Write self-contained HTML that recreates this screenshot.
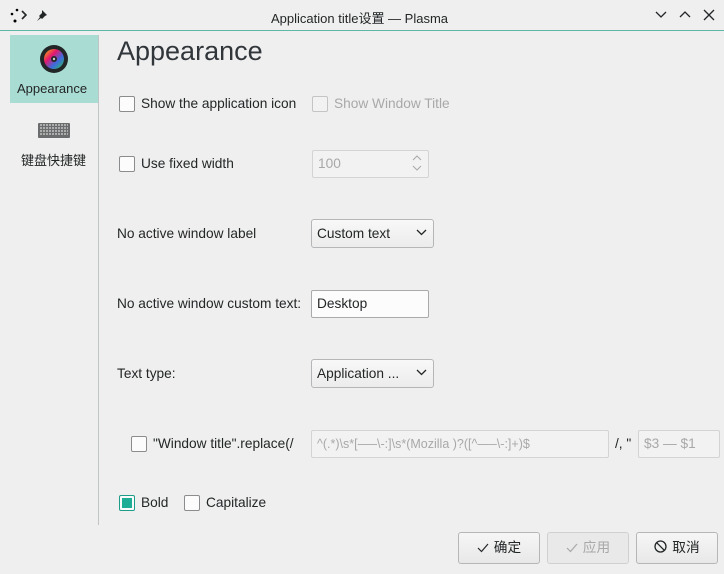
<!DOCTYPE html>
<html><head><style>
body{margin:0;width:724px;height:574px;background:#efefef;font-family:"Liberation Sans","Noto Sans CJK SC",sans-serif;font-size:13.7px;color:#232627;position:relative;overflow:hidden}
.a{position:absolute;white-space:nowrap}
.cb{position:absolute;width:14px;height:14px;border:1px solid #8a8c8e;border-radius:2px;background:#fcfcfc}
.cb.dis{border-color:#c4c4c4;background:#f2f2f2}
.in{position:absolute;border:1px solid #bcbebf;border-radius:2px;background:#fcfcfc;box-sizing:border-box;padding-left:5px;line-height:26px}
.in.dis{background:#f2f2f2;border-color:#d4d4d4;color:#a8a8a8}
.btn{position:absolute;border:1px solid #b4b6b8;border-radius:3px;background:linear-gradient(#f6f6f6,#e8e8e8);box-sizing:border-box;text-align:center;line-height:29px}
.btn svg{vertical-align:-1px;margin-right:5px}
.combo{position:absolute;border:1px solid #b4b6b8;border-radius:3px;background:linear-gradient(#f8f8f8,#ececec);box-sizing:border-box;padding-left:5px;line-height:27px}
.chev{position:absolute;right:6px;top:9px}
</style></head><body>
<div class="a" style="left:0;top:30px;width:724px;height:1px;background:#5fb8a6"></div>
<svg class="a" style="left:9px;top:8px" width="18" height="16"><circle cx="8" cy="2" r="1.3"/><circle cx="3" cy="6" r="1.3"/><circle cx="6" cy="13" r="1.5"/><path d="M13 3l4 4-4 4" stroke="#232627" stroke-width="1.6" fill="none"/></svg>
<svg class="a" style="left:36px;top:9px" width="12" height="12"><path d="M6 1l5 5-2 1-3 3-1-1-4 3 3-4-1-1 3-3z" fill="#232627"/></svg>
<div class="a" style="left:271px;top:8px;font-size:13px">Application title设置 — Plasma</div>
<svg class="a" style="left:655px;top:9px" width="60" height="12" stroke="#232627" stroke-width="1.3" fill="none"><path d="M1 3l5 5 5-5M25 8l5-5 5 5M49 1l10 10M59 1l-10 10"/></svg>
<div class="a" style="left:10px;top:35px;width:89px;height:68px;background:#a9dcd3"></div>
<div class="a" style="left:98px;top:35px;width:1px;height:490px;background:#bfc5c4"></div>
<svg class="a" style="left:39px;top:44px" width="30" height="30"><defs><linearGradient id="g" x1="0" y1="0" x2="1" y2="1"><stop offset="0" stop-color="#f2c500"/><stop offset=".35" stop-color="#e8176c"/><stop offset=".65" stop-color="#3c6be0"/><stop offset="1" stop-color="#2ec84d"/></linearGradient></defs><circle cx="15" cy="15" r="14" fill="#232627"/><circle cx="15" cy="15" r="10" fill="url(#g)"/><circle cx="15" cy="15" r="3" fill="#232627"/><circle cx="15" cy="15" r="1.2" fill="#ccc"/></svg>
<div class="a" style="left:17px;top:81px;font-size:13px">Appearance</div>
<svg class="a" style="left:38px;top:120px" width="32" height="18" fill="#6a6c6e"><rect x="0" y="3" width="32" height="15" rx="1"/><path d="M2 5h28M2 8h28M2 11h28M2 14h28" stroke="#efefef" stroke-width="1" stroke-dasharray="2 1"/></svg>
<div class="a" style="left:21px;top:150px;font-size:13px">键盘快捷键</div>
<div class="a" style="left:117px;top:36px;font-size:27px;color:#31363b">Appearance</div>
<div class="cb" style="left:119px;top:96px"></div><div class="a" style="left:141px;top:96px">Show the application icon</div>
<div class="cb dis" style="left:312px;top:96px"></div><div class="a" style="left:334px;top:96px;color:#a8a8a8">Show Window Title</div>
<div class="cb" style="left:119px;top:156px"></div><div class="a" style="left:141px;top:156px">Use fixed width</div>
<div class="in dis" style="left:312px;top:150px;width:117px;height:28px">100</div>
<svg class="a" style="left:412px;top:154px" width="10" height="18" stroke="#a8a8a8" fill="none"><path d="M1 6l4-4 4 4M1 12l4 4 4-4"/></svg>
<div class="a" style="left:117px;top:226px">No active window label</div>
<div class="combo" style="left:311px;top:219px;width:123px;height:29px">Custom text<svg class="chev" width="11" height="7" stroke="#232627" stroke-width="1.3" fill="none"><path d="M1 1l4.5 4.5L10 1"/></svg></div>
<div class="a" style="left:117px;top:296px">No active window custom text:</div>
<div class="in" style="left:311px;top:290px;width:118px;height:28px;border-color:#a8aaac">Desktop</div>
<div class="a" style="left:117px;top:366px">Text type:</div>
<div class="combo" style="left:311px;top:359px;width:123px;height:29px">Application ...<svg class="chev" width="11" height="7" stroke="#232627" stroke-width="1.3" fill="none"><path d="M1 1l4.5 4.5L10 1"/></svg></div>
<div class="cb" style="left:131px;top:436px"></div><div class="a" style="left:153px;top:436px">"Window title".replace(/</div>
<div class="in dis" style="left:311px;top:430px;width:298px;height:28px;font-size:12.5px">^(.*)\s*[—–\-:]\s*(Mozilla )?([^—–\-:]+)$</div>
<div class="a" style="left:615px;top:436px">/, "</div>
<div class="in dis" style="left:638px;top:430px;width:82px;height:28px">$3 — $1</div>
<div class="cb" style="left:119px;top:495px;border-color:#1d9c87;background:#fcfcfc"></div><div class="a" style="left:122px;top:498px;width:10px;height:10px;background:#1fae95"></div>
<div class="a" style="left:141px;top:495px">Bold</div>
<div class="cb" style="left:184px;top:495px"></div><div class="a" style="left:206px;top:495px">Capitalize</div>
<div class="btn" style="left:458px;top:532px;width:82px;height:32px"><svg width="12" height="10" stroke="#232627" stroke-width="1.2" fill="none"><path d="M1 5l3.5 3.5L11 1"/></svg>确定</div>
<div class="btn" style="left:547px;top:532px;width:82px;height:32px;color:#a8a8a8;background:#e9e9e9;border-color:#d0d0d0"><svg width="12" height="10" stroke="#a8a8a8" stroke-width="1.2" fill="none"><path d="M1 5l3.5 3.5L11 1"/></svg>应用</div>
<div class="btn" style="left:636px;top:532px;width:82px;height:32px"><svg width="13" height="13" stroke="#232627" stroke-width="1.3" fill="none"><circle cx="6.5" cy="6.5" r="5.5"/><path d="M2.8 2.8l7.4 7.4"/></svg>取消</div>
</body></html>
